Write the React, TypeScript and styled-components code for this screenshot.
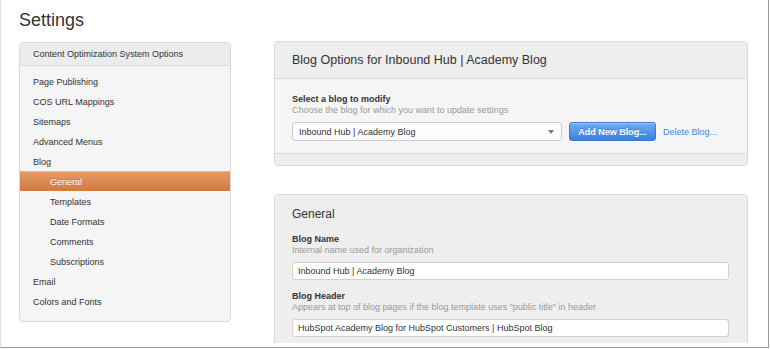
import React from "react";
import styled, { createGlobalStyle } from "styled-components";

const GlobalStyle = createGlobalStyle`
  html, body {
    margin: 0;
    padding: 0;
    background: #ffffff;
  }
  body {
    font-family: "Liberation Sans", Arial, Helvetica, sans-serif;
    color: #333333;
  }
`;

const Frame = styled.div`
  width: 767px;
  height: 347px;
  border-left: 1px solid #e2e2e2;
  border-right: 1px solid #9c9c9c;
  border-bottom: 1px solid #9c9c9c;
  background: #ffffff;
`;

const Page = styled.div`
  height: 343px;
  overflow: hidden;
  padding: 8px 0 0 18px;
  box-sizing: border-box;
`;

const Title = styled.h1`
  margin: 0 0 9px;
  font-size: 18px;
  line-height: 24px;
  font-weight: normal;
  color: #333333;
`;

const Layout = styled.div`
  display: grid;
  grid-template-columns: 212px 474px;
  column-gap: 43px;
  align-items: start;
`;

const Sidebar = styled.nav`
  border: 1px solid #d9d9d9;
  border-radius: 4px;
  background: #f5f5f5;
  overflow: hidden;
  margin-top: 1px;
`;

const SidebarHeader = styled.div`
  height: 22px;
  line-height: 22px;
  padding-left: 13px;
  background: #ececec;
  border-bottom: 1px solid #dcdcdc;
  font-size: 9px;
  color: #333333;
`;

const MenuList = styled.ul`
  list-style: none;
  margin: 0;
  padding: 5px 0 10px;
`;

const MenuItem = styled.li<{ $sub?: boolean; $active?: boolean }>`
  height: 20px;
  line-height: 20px;
  padding-left: ${(p) => (p.$sub ? "30px" : "13px")};
  font-size: 9px;
  color: ${(p) => (p.$active ? "#ffffff" : "#333333")};
  background: ${(p) =>
    p.$active ? "linear-gradient(#e39b68, #d47a3d)" : "transparent"};
  border-top: 1px solid ${(p) => (p.$active ? "#eab48c" : "transparent")};
  box-sizing: border-box;
  text-shadow: ${(p) => (p.$active ? "0 -1px 0 rgba(120, 60, 20, 0.35)" : "none")};
`;

const Main = styled.div`
  display: flex;
  flex-direction: column;
  gap: 28px;
`;

const Panel = styled.section`
  border: 1px solid #d9d9d9;
  border-radius: 4px;
  overflow: hidden;
  background: #eeeeee;
`;

const PanelHeader = styled.div`
  height: 36px;
  display: flex;
  align-items: center;
  padding-left: 17px;
  background: #eeeeee;
  border-bottom: 1px solid #d9d9d9;
  font-size: 12.5px;
  color: #333333;
`;

const PanelBody = styled.div<{ $plain?: boolean }>`
  padding: ${(p) => (p.$plain ? "12px 18px 20px 17px" : "15px 18px 12px 17px")};
  background: ${(p) => (p.$plain ? "#eeeeee" : "#f5f5f5")};
`;

const PanelFooter = styled.div`
  height: 11px;
  border-top: 1px solid #d9d9d9;
  background: #eeeeee;
`;

const SectionTitle = styled.h2`
  margin: 0 0 13px;
  font-size: 12px;
  line-height: 14px;
  font-weight: normal;
  color: #333333;
`;

const Field = styled.div`
  & + & {
    margin-top: 11px;
  }
`;

const Label = styled.div`
  font-size: 9px;
  line-height: 11px;
  font-weight: bold;
  color: #333333;
`;

const Help = styled.div`
  font-size: 9px;
  line-height: 11px;
  color: #999999;
  margin-bottom: 6px;
`;

const Controls = styled.div`
  display: flex;
  align-items: center;
  gap: 7px;
  margin-top: 5px;
`;

const Select = styled.div`
  width: 270px;
  height: 19px;
  box-sizing: border-box;
  display: flex;
  align-items: center;
  justify-content: space-between;
  padding: 0 5px 0 6px;
  background: linear-gradient(#ffffff, #fafafa);
  border: 1px solid #cccccc;
  border-radius: 3px;
  font-size: 9px;
  color: #333333;
`;

const Caret = styled.span`
  width: 0;
  height: 0;
  border-left: 3.5px solid transparent;
  border-right: 3.5px solid transparent;
  border-top: 4px solid #777777;
  margin-right: 2px;
`;

const PrimaryButton = styled.button`
  width: 87px;
  height: 19px;
  padding: 0;
  border: 1px solid #3c79cf;
  border-radius: 3px;
  background: linear-gradient(#71adf1, #3a80e0);
  color: #ffffff;
  font-family: inherit;
  font-size: 9px;
  font-weight: bold;
  text-shadow: 0 -1px 0 rgba(20, 60, 140, 0.4);
  box-shadow: inset 0 1px 0 rgba(255, 255, 255, 0.3);
`;

const LinkText = styled.a`
  font-size: 9px;
  color: #3f86d8;
  text-decoration: none;
`;

const TextInput = styled.div`
  height: 18px;
  box-sizing: border-box;
  display: flex;
  align-items: center;
  padding-left: 5px;
  background: #ffffff;
  border: 1px solid #d0d0d0;
  border-radius: 3px;
  font-size: 9px;
  color: #333333;
`;

const menu: { label: string; sub?: boolean; active?: boolean }[] = [
  { label: "Page Publishing" },
  { label: "COS URL Mappings" },
  { label: "Sitemaps" },
  { label: "Advanced Menus" },
  { label: "Blog" },
  { label: "General", sub: true, active: true },
  { label: "Templates", sub: true },
  { label: "Date Formats", sub: true },
  { label: "Comments", sub: true },
  { label: "Subscriptions", sub: true },
  { label: "Email" },
  { label: "Colors and Fonts" },
];

export default function App() {
  return (
    <>
      <GlobalStyle />
      <Frame>
        <Page>
          <Title>Settings</Title>
          <Layout>
            <Sidebar>
              <SidebarHeader>Content Optimization System Options</SidebarHeader>
              <MenuList>
                {menu.map((item) => (
                  <MenuItem key={item.label} $sub={item.sub} $active={item.active}>
                    {item.label}
                  </MenuItem>
                ))}
              </MenuList>
            </Sidebar>

            <Main>
              <Panel>
                <PanelHeader>Blog Options for Inbound Hub | Academy Blog</PanelHeader>
                <PanelBody>
                  <Label>Select a blog to modify</Label>
                  <Help>Choose the blog for which you want to update settings</Help>
                  <Controls>
                    <Select>
                      Inbound Hub | Academy Blog
                      <Caret />
                    </Select>
                    <PrimaryButton type="button">Add New Blog...</PrimaryButton>
                    <LinkText href="#">Delete Blog...</LinkText>
                  </Controls>
                </PanelBody>
                <PanelFooter />
              </Panel>

              <Panel>
                <PanelBody $plain>
                  <SectionTitle>General</SectionTitle>
                  <Field>
                    <Label>Blog Name</Label>
                    <Help>Internal name used for organization</Help>
                    <TextInput>Inbound Hub | Academy Blog</TextInput>
                  </Field>
                  <Field>
                    <Label>Blog Header</Label>
                    <Help>
                      Appears at top of blog pages if the blog template uses "public title" in header
                    </Help>
                    <TextInput>HubSpot Academy Blog for HubSpot Customers | HubSpot Blog</TextInput>
                  </Field>
                </PanelBody>
              </Panel>
            </Main>
          </Layout>
        </Page>
      </Frame>
    </>
  );
}
